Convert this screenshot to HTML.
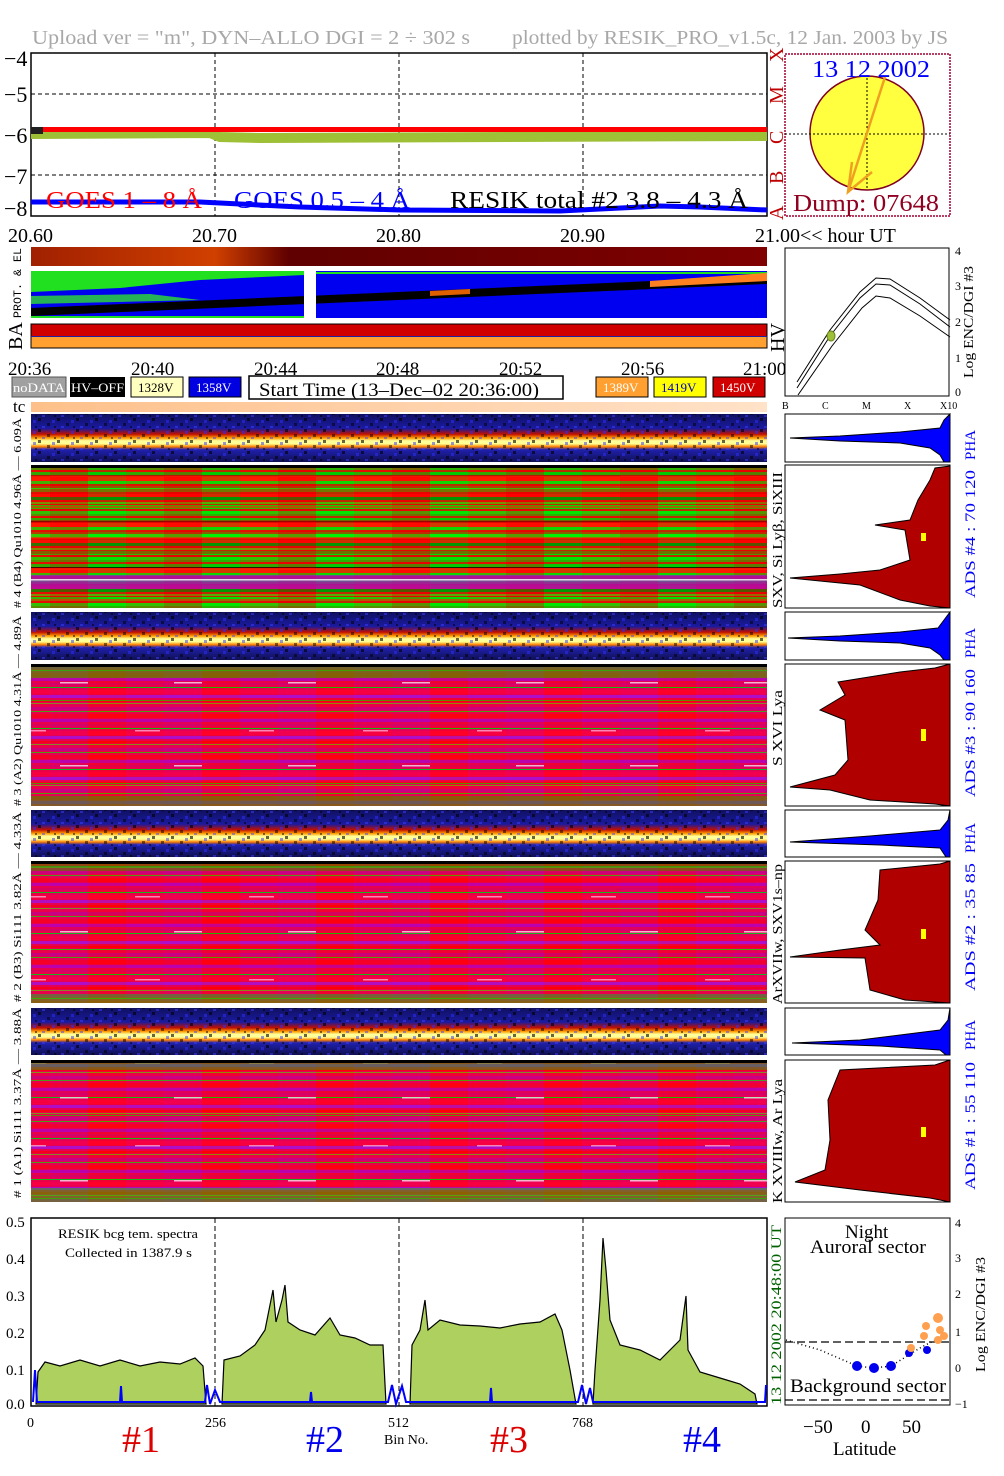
<!DOCTYPE html>
<html><head><meta charset="utf-8"><style>
html,body{margin:0;padding:0;background:#fff;}
svg{display:block;}
text{font-family:"Liberation Serif",serif;}
.m{font-family:"Liberation Mono",monospace;}
</style></head><body>
<svg width="1004" height="1476" viewBox="0 0 1004 1476" xmlns="http://www.w3.org/2000/svg">
<defs>
<pattern id="gr1" patternUnits="userSpaceOnUse" x="31" y="465" width="38" height="46">
<rect width="38" height="46" fill="#e00000"/>
<rect y="0" width="38" height="3" fill="#00e000"/><rect y="3" width="38" height="2" fill="#30a000"/>
<rect y="7" width="38" height="3" fill="#00c000"/><rect y="10" width="38" height="1" fill="#000"/>
<rect y="12" width="38" height="4" fill="#ff1000"/><rect y="16" width="38" height="3" fill="#10d000"/>
<rect y="21" width="38" height="2" fill="#a04000"/><rect y="23" width="38" height="4" fill="#00f000"/>
<rect y="29" width="38" height="3" fill="#ff0000"/><rect y="32" width="38" height="3" fill="#008000"/>
<rect y="37" width="38" height="2" fill="#60a000"/><rect y="40" width="38" height="4" fill="#00d800"/>
</pattern>
<pattern id="gr2" patternUnits="userSpaceOnUse" x="50" y="470" width="114" height="31">
<rect width="38" height="31" fill="#ff0000" opacity="0.35"/>
<rect x="38" width="38" height="31" fill="#00ff00" opacity="0.18"/>
<rect x="76" width="38" height="31" fill="#ff4000" opacity="0.2"/>
<rect y="5" width="114" height="2" fill="#ff2000" opacity="0.6"/>
<rect y="19" width="114" height="3" fill="#e00000" opacity="0.5"/>
</pattern>
<pattern id="rm1" patternUnits="userSpaceOnUse" x="31" y="664" width="38" height="41">
<rect width="38" height="41" fill="#f0003a"/>
<rect y="2" width="38" height="3" fill="#d00070"/><rect y="6" width="38" height="1" fill="#40b000"/>
<rect y="9" width="38" height="4" fill="#ff0010"/><rect y="14" width="38" height="3" fill="#c000a0"/>
<rect y="19" width="38" height="2" fill="#e00050"/><rect y="23" width="38" height="1" fill="#00d000"/>
<rect y="26" width="38" height="4" fill="#ff0030"/><rect y="31" width="38" height="3" fill="#b010c0"/>
<rect y="36" width="38" height="2" fill="#ff0000"/><rect y="39" width="38" height="1" fill="#80a000"/>
</pattern>
<pattern id="rm2" patternUnits="userSpaceOnUse" x="50" y="670" width="114" height="83">
<rect width="38" height="83" fill="#a000ff" opacity="0.15"/>
<rect x="38" width="38" height="83" fill="#ff0000" opacity="0.15"/>
<rect x="76" width="38" height="83" fill="#c000c0" opacity="0.12"/>
<rect x="10" y="12" width="28" height="1.5" fill="#fff" opacity="0.7"/>
<rect x="85" y="60" width="25" height="1.5" fill="#ffe0ff" opacity="0.6"/>
<rect y="30" width="114" height="1" fill="#20c000" opacity="0.7"/>
</pattern>
<linearGradient id="pha" x1="0" y1="0" x2="0" y2="1">
<stop offset="0" stop-color="#101060"/><stop offset="0.3" stop-color="#1a1aa0"/>
<stop offset="0.42" stop-color="#c01000"/><stop offset="0.5" stop-color="#ffa000"/>
<stop offset="0.56" stop-color="#ffffa0"/><stop offset="0.62" stop-color="#ffff90"/>
<stop offset="0.68" stop-color="#ff8000"/><stop offset="0.74" stop-color="#2020b0"/>
<stop offset="1" stop-color="#101050"/></linearGradient>
<pattern id="noise" patternUnits="userSpaceOnUse" width="19" height="11">
<rect x="0" y="0" width="3" height="3" fill="#000" opacity="0.6"/>
<rect x="9" y="5" width="3" height="3" fill="#000" opacity="0.5"/>
<rect x="4" y="8" width="3" height="2" fill="#4040ff" opacity="0.5"/>
<rect x="14" y="2" width="3" height="3" fill="#3030ff" opacity="0.5"/>
<rect x="16" y="8" width="2" height="2" fill="#000" opacity="0.5"/>
</pattern>
<linearGradient id="redbar" x1="0" y1="0" x2="1" y2="0">
<stop offset="0" stop-color="#a02000"/><stop offset="0.25" stop-color="#d04000"/>
<stop offset="0.35" stop-color="#600000"/><stop offset="1" stop-color="#800000"/></linearGradient>
<linearGradient id="tc" x1="0" y1="0" x2="1" y2="0">
<stop offset="0" stop-color="#fdc08a"/><stop offset="1" stop-color="#ffe2c8"/></linearGradient>
</defs>

<text x="32" y="44" font-size="20" fill="#a8a8a8" textLength="438" lengthAdjust="spacingAndGlyphs">Upload ver = "m", DYN–ALLO DGI =   2 ÷ 302 s</text>
<text x="512" y="44" font-size="20" fill="#a8a8a8" textLength="436" lengthAdjust="spacingAndGlyphs">plotted by RESIK_PRO_v1.5c, 12 Jan. 2003 by JS</text>

<rect x="31" y="53" width="736" height="163" fill="#fff" stroke="#000" stroke-width="1.5"/>
<g stroke="#000" stroke-dasharray="4,3" stroke-width="1">
<line x1="31" y1="94" x2="767" y2="94"/><line x1="31" y1="175" x2="767" y2="175"/>
<line x1="215" y1="53" x2="215" y2="216"/><line x1="399" y1="53" x2="399" y2="216"/><line x1="583" y1="53" x2="583" y2="216"/>
</g>
<path d="M31,134 L210,133 L220,137 L260,138 L767,136" stroke="#9ec036" stroke-width="10" fill="none"/>
<rect x="31" y="127" width="736" height="5" fill="#ff0000"/>
<path d="M31,202 L200,202 L240,204 L300,207 L400,210 L560,211 L600,209 L660,206 L700,207 L767,210" stroke="#0000ff" stroke-width="5" fill="none"/>
<rect x="31" y="127" width="12" height="7" fill="#202020"/>
<g font-size="22">
<text x="4" y="66">−4</text><text x="4" y="102">−5</text><text x="4" y="143">−6</text><text x="4" y="184">−7</text><text x="4" y="216">−8</text>
</g>
<text x="46" y="208" font-size="24" fill="#ff0000" textLength="156" lengthAdjust="spacingAndGlyphs">GOES 1 – 8 Å</text>
<text x="234" y="208" font-size="24" fill="#0000ff" textLength="176" lengthAdjust="spacingAndGlyphs">GOES 0.5 – 4 Å</text>
<text x="450" y="208" font-size="24" fill="#000" textLength="298" lengthAdjust="spacingAndGlyphs">RESIK total #2  3.8 – 4.3 Å</text>
<g fill="#c00000" font-size="20" font-family="Liberation Serif">
<text transform="translate(783,62) rotate(-90)">X</text>
<text transform="translate(783,104) rotate(-90)">M</text>
<text transform="translate(783,144) rotate(-90)">C</text>
<text transform="translate(783,184) rotate(-90)">B</text>
<text transform="translate(783,220) rotate(-90)">A</text>
</g>
<rect x="785" y="54" width="165" height="162" fill="#fff" stroke="#a00030" stroke-width="1.5" stroke-dasharray="2,1"/>
<ellipse cx="867" cy="133" rx="57" ry="57" fill="#ffff40" stroke="#800020" stroke-width="1.5"/>
<line x1="785" y1="134" x2="950" y2="134" stroke="#000" stroke-dasharray="2,2"/>
<line x1="867" y1="78" x2="867" y2="190" stroke="#000" stroke-dasharray="2,2"/>
<path d="M885,77 L848,192 M852,162 L848,192 L872,172" stroke="#f0a020" stroke-width="2.5" fill="none"/>
<text x="812" y="77" font-size="24" fill="#0000ff" textLength="118" lengthAdjust="spacingAndGlyphs">13 12 2002</text>
<text x="793" y="211" font-size="24" fill="#900020" textLength="146" lengthAdjust="spacingAndGlyphs">Dump: 07648</text>

<g font-size="20">
<text x="8" y="242">20.60</text><text x="192" y="242">20.70</text><text x="376" y="242">20.80</text><text x="560" y="242">20.90</text><text x="755" y="242">21.00&lt;&lt; hour UT</text>
</g>
<rect x="31" y="247" width="736" height="19" fill="url(#redbar)"/>
<text class="m" transform="translate(21,318) rotate(-90)" font-size="11" textLength="70" lengthAdjust="spacingAndGlyphs">PROT. &amp; EL</text>
<rect x="31" y="271" width="736" height="47" fill="#0000f0"/>
<path d="M31,271 L304,271 L304,275 L200,280 L120,288 L31,292Z" fill="#20e020"/>
<path d="M31,296 L150,294 L200,300 L31,304Z" fill="#30e030" opacity="0.8"/>
<rect x="31" y="316" width="273" height="2" fill="#20e020"/>
<rect x="316" y="272" width="451" height="2" fill="#20e020"/>
<path d="M31,308 L767,276 L767,284 L31,316Z" fill="#000"/>
<path d="M650,281 L767,273 L767,281 L650,287Z" fill="#ff8020"/>
<path d="M430,291 L470,289 L470,294 L430,296Z" fill="#e06000"/>
<rect x="304" y="271" width="12" height="47" fill="#fff"/>
<text transform="translate(22,350) rotate(-90)" font-size="20">BA</text>
<rect x="31" y="324" width="736" height="24" fill="#ffa030" stroke="#000"/>
<rect x="31.5" y="324.5" width="735" height="12" fill="#d00000"/>
<line x1="31" y1="336.5" x2="767" y2="336.5" stroke="#2020a0"/>
<text transform="translate(784,352) rotate(-90)" font-size="20">HV</text>
<g font-size="19">
<text x="8" y="375">20:36</text><text x="131" y="375">20:40</text><text x="254" y="375">20:44</text><text x="376" y="375">20:48</text><text x="499" y="375">20:52</text><text x="621" y="375">20:56</text><text x="743" y="375">21:00</text>
</g>
<g font-size="13">
<rect x="12" y="377" width="54" height="20" fill="#a0a0a0" stroke="#555"/><text x="13" y="392" fill="#fff" textLength="52" lengthAdjust="spacingAndGlyphs">noDATA</text>
<rect x="70" y="377" width="55" height="20" fill="#000"/><text x="71" y="392" fill="#fff" textLength="53" lengthAdjust="spacingAndGlyphs">HV–OFF</text>
<rect x="131" y="377" width="52" height="20" fill="#ffffc0" stroke="#000"/><text x="138" y="392" fill="#000">1328V</text>
<rect x="189" y="377" width="52" height="20" fill="#0000e0" stroke="#000"/><text x="196" y="392" fill="#fff">1358V</text>
<rect x="596" y="377" width="52" height="20" fill="#ffa030" stroke="#000"/><text x="603" y="392" fill="#fff">1389V</text>
<rect x="654" y="377" width="52" height="20" fill="#ffff00" stroke="#000"/><text x="661" y="392" fill="#0000c0">1419V</text>
<rect x="713" y="377" width="52" height="20" fill="#d00000" stroke="#000"/><text x="720" y="392" fill="#fff">1450V</text>
</g>
<rect x="249" y="376" width="314" height="23" fill="#fff" stroke="#000" stroke-width="1.5"/>
<text x="259" y="396" font-size="19" textLength="280" lengthAdjust="spacingAndGlyphs">Start Time (13–Dec–02 20:36:00)</text>
<text x="13" y="412" font-size="17">tc</text>
<rect x="31" y="402" width="736" height="10" fill="url(#tc)"/>

<rect x="785" y="248" width="164" height="148" fill="#fff" stroke="#000"/>
<g fill="none" stroke="#000" stroke-width="1">
<path d="M797,382 L830,330 L860,292 L876,278 L890,279 L920,298 L950,320"/>
<path d="M797,388 L830,336 L860,298 L876,284 L890,285 L920,304 L950,327"/>
<path d="M798,395 L832,346 L862,308 L876,296 L890,298 L920,316 L950,337"/>
</g>
<ellipse cx="831" cy="336" rx="4" ry="5" fill="#9ec036" stroke="#6a8020"/>
<g font-size="12"><text x="955" y="255">4</text><text x="955" y="290">3</text><text x="955" y="326">2</text><text x="955" y="362">1</text><text x="955" y="396">0</text></g>
<text transform="translate(973,378) rotate(-90)" font-size="14" textLength="112" lengthAdjust="spacingAndGlyphs">Log ENC/DGI #3</text>
<g font-size="10"><text x="782" y="409">B</text><text x="822" y="409">C</text><text x="862" y="409">M</text><text x="904" y="409">X</text><text x="940" y="409">X10</text></g>

<g>
<rect x="31" y="414" width="736" height="48" fill="url(#pha)"/><rect x="31" y="414" width="736" height="48" fill="url(#noise)"/>
<rect x="31" y="612" width="736" height="48" fill="url(#pha)"/><rect x="31" y="612" width="736" height="48" fill="url(#noise)"/>
<rect x="31" y="810" width="736" height="47" fill="url(#pha)"/><rect x="31" y="810" width="736" height="47" fill="url(#noise)"/>
<rect x="31" y="1008" width="736" height="47" fill="url(#pha)"/><rect x="31" y="1008" width="736" height="47" fill="url(#noise)"/>
</g>
<rect x="31" y="465" width="736" height="143" fill="url(#gr1)"/>
<rect x="31" y="465" width="736" height="143" fill="url(#gr2)"/>
<rect x="31" y="575" width="736" height="14" fill="#a010d0" opacity="0.7"/>
<rect x="31" y="579" width="736" height="1.5" fill="#fff" opacity="0.8"/>
<rect x="31" y="465" width="736" height="3" fill="#000"/>

<rect x="31" y="664" width="736" height="142" fill="url(#rm1)"/>
<rect x="31" y="664" width="736" height="142" fill="url(#rm2)"/>
<rect x="31" y="664" width="736" height="14" fill="#20b000" opacity="0.55"/>
<rect x="31" y="796" width="736" height="10" fill="#20b000" opacity="0.5"/>
<rect x="31" y="664" width="736" height="3" fill="#000"/>

<rect x="31" y="861" width="736" height="142" fill="url(#rm1)"/>
<rect x="31" y="861" width="736" height="142" fill="url(#rm2)"/>
<rect x="31" y="861" width="736" height="10" fill="#20a000" opacity="0.45"/>
<rect x="31" y="994" width="736" height="9" fill="#20c000" opacity="0.5"/>
<rect x="31" y="861" width="736" height="3" fill="#000"/>

<rect x="31" y="1060" width="736" height="142" fill="url(#rm1)"/>
<rect x="31" y="1060" width="736" height="142" fill="url(#rm2)"/>
<rect x="31" y="1060" width="736" height="10" fill="#20b000" opacity="0.5"/>
<rect x="31" y="1188" width="736" height="14" fill="#20c000" opacity="0.5"/>
<rect x="31" y="1060" width="736" height="3" fill="#000"/>

<g class="m" font-size="11">
<text transform="translate(21,608) rotate(-90)" textLength="190" lengthAdjust="spacingAndGlyphs"># 4 (B4) Qu1010 4.96Å — 6.09Å</text>
<text transform="translate(21,806) rotate(-90)" textLength="190" lengthAdjust="spacingAndGlyphs"># 3 (A2) Qu1010 4.31Å — 4.89Å</text>
<text transform="translate(21,1002) rotate(-90)" textLength="190" lengthAdjust="spacingAndGlyphs"># 2 (B3) Si111  3.82Å — 4.33Å</text>
<text transform="translate(21,1198) rotate(-90)" textLength="190" lengthAdjust="spacingAndGlyphs"># 1 (A1) Si111  3.37Å — 3.88Å</text>
</g>
<g font-size="14">
<text transform="translate(782,608) rotate(-90)" textLength="136" lengthAdjust="spacingAndGlyphs">SXV, Si Lyβ, SiXIII</text>
<text transform="translate(782,766) rotate(-90)" textLength="76" lengthAdjust="spacingAndGlyphs">S XVI Lya</text>
<text transform="translate(782,1004) rotate(-90)" textLength="140" lengthAdjust="spacingAndGlyphs">ArXVIIw, SXV1s–np</text>
<text transform="translate(782,1203) rotate(-90)" textLength="124" lengthAdjust="spacingAndGlyphs">K XVIIIw, Ar Lya</text>
</g>
<g font-size="15" fill="#0000ff" class="m">
<text transform="translate(975,460) rotate(-90)">PHA</text>
<text transform="translate(975,598) rotate(-90)" textLength="128" lengthAdjust="spacingAndGlyphs">ADS #4 :   70 120</text>
<text transform="translate(975,658) rotate(-90)">PHA</text>
<text transform="translate(975,797) rotate(-90)" textLength="128" lengthAdjust="spacingAndGlyphs">ADS #3 :   90 160</text>
<text transform="translate(975,853) rotate(-90)">PHA</text>
<text transform="translate(975,991) rotate(-90)" textLength="128" lengthAdjust="spacingAndGlyphs">ADS #2 :   35  85</text>
<text transform="translate(975,1050) rotate(-90)">PHA</text>
<text transform="translate(975,1190) rotate(-90)" textLength="128" lengthAdjust="spacingAndGlyphs">ADS #1 :   55 110</text>
</g>

<g stroke="#000" stroke-width="1">
<rect x="785" y="414" width="165" height="48" fill="#fff"/>
<path d="M950,414 L944,420 L940,428 L900,432 L840,436 L790,438 L840,441 L900,443 L930,448 L940,455 L944,462 L950,462Z" fill="#0000ff"/>
<rect x="785" y="465" width="165" height="143" fill="#fff"/>
<path d="M950,466 L935,468 L930,480 L918,500 L910,520 L875,525 L905,530 L910,560 L880,570 L840,574 L790,578 L860,585 L900,600 L930,606 L950,608Z" fill="#b00000"/>
<rect x="785" y="612" width="165" height="48" fill="#fff"/>
<path d="M950,612 L944,620 L938,628 L900,632 L840,636 L788,638 L840,641 L900,643 L930,648 L940,655 L944,660 L950,660Z" fill="#0000ff"/>
<rect x="785" y="664" width="165" height="142" fill="#fff"/>
<path d="M950,664 L935,668 L900,672 L838,682 L845,695 L820,710 L845,720 L848,760 L835,775 L790,787 L830,790 L870,800 L935,804 L950,806Z" fill="#b00000"/>
<rect x="785" y="810" width="165" height="47" fill="#fff"/>
<path d="M950,810 L948,820 L940,830 L870,836 L790,842 L880,845 L940,848 L946,857 L950,857Z" fill="#0000ff"/>
<rect x="785" y="861" width="165" height="142" fill="#fff"/>
<path d="M950,861 L940,864 L880,870 L878,900 L865,930 L880,945 L840,950 L790,957 L865,958 L870,990 L905,1000 L950,1003Z" fill="#b00000"/>
<rect x="785" y="1008" width="165" height="47" fill="#fff"/>
<path d="M950,1008 L948,1020 L940,1030 L860,1040 L792,1043 L880,1046 L940,1050 L946,1055 L950,1055Z" fill="#0000ff"/>
<rect x="785" y="1060" width="165" height="142" fill="#fff"/>
<path d="M950,1060 L935,1065 L840,1070 L828,1100 L830,1140 L825,1170 L795,1182 L860,1190 L930,1198 L950,1202Z" fill="#b00000"/>
</g>
<rect x="921" y="533" width="5" height="8" fill="#ffff00"/>
<rect x="921" y="729" width="5" height="12" fill="#ffff00"/>
<rect x="921" y="929" width="5" height="10" fill="#ffff00"/>
<rect x="921" y="1127" width="5" height="10" fill="#ffff00"/>

<rect x="31" y="1218" width="736" height="188" fill="#fff" stroke="#000" stroke-width="1.5"/>
<g stroke="#000" stroke-dasharray="5,3"><line x1="215" y1="1218" x2="215" y2="1406"/><line x1="399" y1="1218" x2="399" y2="1406"/><line x1="583" y1="1218" x2="583" y2="1406"/></g>
<g fill="#aed05e" stroke="#000" stroke-width="1.2">
<path d="M36,1404 L38,1372 L45,1362 L60,1366 L80,1360 L100,1366 L120,1360 L140,1366 L160,1362 L180,1364 L195,1358 L203,1366 L206,1404Z"/>
<path d="M222,1404 L224,1360 L240,1356 L255,1345 L265,1330 L270,1305 L273,1290 L276,1322 L282,1300 L285,1285 L288,1322 L300,1330 L315,1335 L330,1318 L340,1335 L355,1338 L370,1345 L383,1345 L386,1404Z"/>
<path d="M410,1404 L412,1345 L420,1330 L425,1300 L428,1330 L440,1320 L460,1325 L480,1326 L500,1328 L520,1324 L540,1322 L555,1314 L562,1330 L570,1370 L576,1404Z"/>
<path d="M593,1404 L595,1370 L600,1300 L603,1238 L606,1270 L610,1320 L620,1345 L640,1350 L660,1360 L680,1340 L686,1296 L688,1350 L700,1372 L720,1378 L740,1384 L755,1394 L757,1404Z"/>
</g>
<path d="M33,1402 L35,1370 L37,1402 L120,1402 L121,1386 L122,1402 L205,1402 L207,1385 L210,1404 L215,1390 L220,1402 L310,1402 L311,1392 L312,1402 L388,1402 L392,1385 L396,1404 L402,1386 L406,1402 L490,1402 L491,1388 L492,1402 L578,1402 L582,1385 L586,1404 L590,1388 L593,1402 L765,1402 L766,1385" fill="none" stroke="#0000ff" stroke-width="2"/>
<g font-size="15"><text x="6" y="1227">0.5</text><text x="6" y="1264">0.4</text><text x="6" y="1301">0.3</text><text x="6" y="1338">0.2</text><text x="6" y="1375">0.1</text><text x="6" y="1409">0.0</text></g>
<text x="58" y="1238" font-size="13" textLength="140" lengthAdjust="spacingAndGlyphs">RESIK bcg tem. spectra</text>
<text x="65" y="1257" font-size="13" textLength="127" lengthAdjust="spacingAndGlyphs">Collected in  1387.9 s</text>
<text transform="translate(781,1405) rotate(-90)" font-size="15" fill="#006000" textLength="180" lengthAdjust="spacingAndGlyphs">13 12 2002    20:48:00 UT</text>
<g font-size="14"><text x="27" y="1427">0</text><text x="205" y="1427">256</text><text x="388" y="1427">512</text><text x="572" y="1427">768</text></g>
<text x="384" y="1444" font-size="14">Bin No.</text>
<g font-size="38"><text x="122" y="1452" fill="#dd0000">#1</text><text x="306" y="1452" fill="#0000ee">#2</text><text x="490" y="1452" fill="#dd0000">#3</text><text x="683" y="1452" fill="#0000ee">#4</text></g>

<rect x="785" y="1218" width="165" height="187" fill="#fff" stroke="#000"/>
<g stroke="#000" stroke-dasharray="8,4" stroke-width="1.2"><line x1="785" y1="1342" x2="950" y2="1342"/><line x1="785" y1="1400" x2="950" y2="1400"/></g>
<path d="M786,1340 L820,1350 L857,1366 L874,1368 L891,1366 L920,1348 L935,1340" fill="none" stroke="#000" stroke-dasharray="1,3" stroke-width="1.5"/>
<g fill="#0000ee"><circle cx="857" cy="1366" r="5"/><circle cx="874" cy="1368" r="5"/><circle cx="891" cy="1366" r="5"/><circle cx="927" cy="1350" r="4"/><circle cx="909" cy="1353" r="4"/></g>
<g fill="#ffa050"><circle cx="911" cy="1348" r="4"/><circle cx="924" cy="1336" r="4"/><circle cx="926" cy="1326" r="4"/><circle cx="938" cy="1318" r="5"/><circle cx="940" cy="1330" r="4"/><circle cx="938" cy="1340" r="4"/><circle cx="944" cy="1336" r="4"/></g>
<text x="845" y="1238" font-size="19">Night</text>
<text x="810" y="1253" font-size="19" textLength="116" lengthAdjust="spacingAndGlyphs">Auroral sector</text>
<text x="790" y="1392" font-size="19" textLength="156" lengthAdjust="spacingAndGlyphs">Background sector</text>
<g font-size="12"><text x="955" y="1227">4</text><text x="955" y="1262">3</text><text x="955" y="1298">2</text><text x="955" y="1336">1</text><text x="955" y="1372">0</text><text x="955" y="1408">−1</text></g>
<text transform="translate(985,1372) rotate(-90)" font-size="14" textLength="115" lengthAdjust="spacingAndGlyphs">Log ENC/DGI #3</text>
<g font-size="19"><text x="803" y="1433">−50</text><text x="861" y="1433">0</text><text x="902" y="1433">50</text></g>
<text x="833" y="1455" font-size="19">Latitude</text>
</svg>
</body></html>
